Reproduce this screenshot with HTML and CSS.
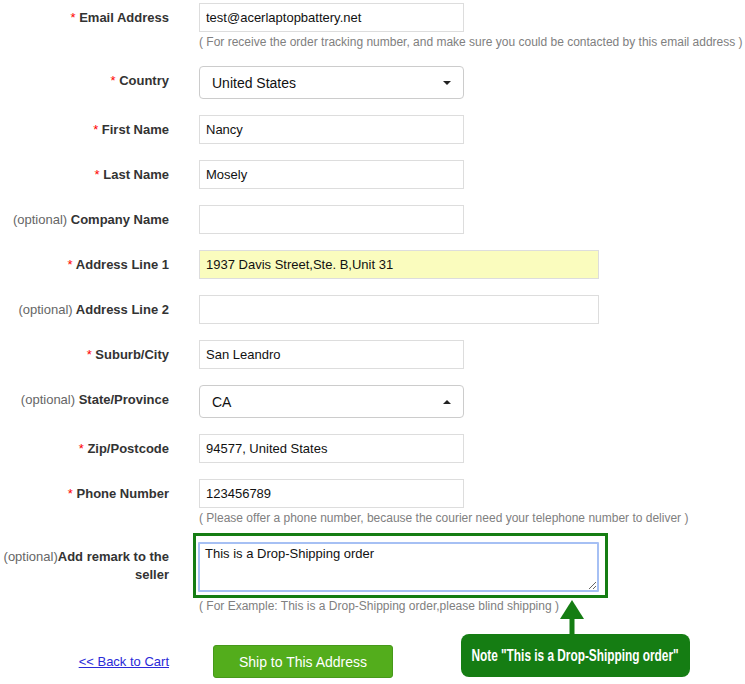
FILE: index.html
```html
<!DOCTYPE html>
<html>
<head>
<meta charset="utf-8">
<link rel="stylesheet" href="styles.css">
</head>
<body>
<form class="form">
  <div class="row">
    <label class="label"><span class="req">*</span> Email Address</label>
    <div class="field">
      <input class="input" type="text" value="test@acerlaptopbattery.net">
      <div class="hint">( For receive the order tracking number, and make sure you could be contacted by this email address )</div>
    </div>
  </div>
  <div class="row">
    <label class="label"><span class="req">*</span> Country</label>
    <div class="field">
      <div class="select-wrap down"><select class="select"><option>United States</option></select></div>
    </div>
  </div>
  <div class="row">
    <label class="label"><span class="req">*</span> First Name</label>
    <div class="field"><input class="input" type="text" value="Nancy"></div>
  </div>
  <div class="row">
    <label class="label"><span class="req">*</span> Last Name</label>
    <div class="field"><input class="input" type="text" value="Mosely"></div>
  </div>
  <div class="row">
    <label class="label"><span class="opt">(optional)</span> Company Name</label>
    <div class="field"><input class="input" type="text" value=""></div>
  </div>
  <div class="row">
    <label class="label"><span class="req">*</span> Address Line 1</label>
    <div class="field"><input class="input wide filled" type="text" value="1937 Davis Street,Ste. B,Unit 31"></div>
  </div>
  <div class="row">
    <label class="label"><span class="opt">(optional)</span> Address Line 2</label>
    <div class="field"><input class="input wide" type="text" value=""></div>
  </div>
  <div class="row">
    <label class="label"><span class="req">*</span> Suburb/City</label>
    <div class="field"><input class="input" type="text" value="San Leandro"></div>
  </div>
  <div class="row">
    <label class="label"><span class="opt">(optional)</span> State/Province</label>
    <div class="field">
      <div class="select-wrap up"><select class="select"><option>CA</option></select></div>
    </div>
  </div>
  <div class="row">
    <label class="label"><span class="req">*</span> Zip/Postcode</label>
    <div class="field"><input class="input" type="text" value="94577, United States"></div>
  </div>
  <div class="row">
    <label class="label"><span class="req">*</span> Phone Number</label>
    <div class="field">
      <input class="input" type="text" value="123456789">
      <div class="hint">( Please offer a phone number, because the courier need your telephone number to deliver )</div>
    </div>
  </div>
  <div class="row">
    <label class="label label-multi"><span class="opt">(optional)</span>Add remark to the seller</label>
    <div class="field">
      <textarea class="textarea">This is a Drop-Shipping order</textarea>
      <div class="hint hint-ta">( For Example: This is a Drop-Shipping order,please blind shipping )</div>
    </div>
  </div>
  <div class="row row-actions">
    <div class="label label-link"><a class="back" href="#">&lt;&lt; Back to Cart</a></div>
    <div class="field"><button class="btn" type="button">Ship to This Address</button></div>
  </div>
</form>

<div class="note-frame"></div>
<svg class="note-arrow" width="26" height="36" viewBox="0 0 26 36">
  <polygon points="13,1 1,20 25,20" fill="#157d13"/>
  <rect x="10.5" y="19" width="5" height="17" fill="#157d13"/>
</svg>
<div class="note"><span class="note-text">Note "This is a Drop-Shipping order"</span></div>
</body>
</html>
```
FILE: styles.css
```css
html, body {
  margin: 0;
  padding: 0;
  overflow: hidden;
  background: #fff;
}
body {
  font-family: "Liberation Sans", Arial, sans-serif;
  color: #333;
  position: relative;
  width: 745px;
  height: 684px;
}
.form {
  padding-top: 3px;
}
.row {
  display: flex;
  align-items: flex-start;
  margin-bottom: 16px;
}
.label {
  flex: none;
  box-sizing: border-box;
  width: 169px;
  height: 29px;
  margin-right: 30px;
  text-align: right;
  font-size: 13px;
  font-weight: bold;
  line-height: 30px;
  color: #333;
  white-space: nowrap;
}
.req {
  color: #f00;
  font-weight: normal;
  line-height: 1;
}
.opt {
  color: #666;
  font-weight: normal;
  font-size: 13px;
  line-height: 1;
}
.field {
  display: flex;
  flex-direction: column;
  align-items: flex-start;
}
.input {
  box-sizing: border-box;
  width: 265px;
  height: 29px;
  margin: 0;
  border: 1px solid #ddd;
  border-radius: 0;
  padding: 0 6px;
  font-family: "Liberation Sans", Arial, sans-serif;
  font-size: 13px;
  color: #111;
  background: #fff;
  outline: none;
}
.input.wide {
  width: 400px;
}
.input.filled {
  background: #fafcbe;
}
.hint {
  margin-top: 2px;
  font-size: 12px;
  line-height: 16px;
  color: #808080;
  white-space: nowrap;
}
.select-wrap {
  position: relative;
  width: 265px;
}
.select {
  display: block;
  box-sizing: border-box;
  width: 265px;
  height: 33px;
  margin: 0;
  border: 1px solid #ccc;
  border-radius: 4px;
  padding: 0 12px;
  font-family: "Liberation Sans", Arial, sans-serif;
  font-size: 14px;
  color: #111;
  background: #fff;
  -webkit-appearance: none;
  appearance: none;
  outline: none;
}
.select-wrap::after {
  content: "";
  position: absolute;
  right: 13px;
  top: 15px;
  width: 0;
  height: 0;
  border-left: 4px solid transparent;
  border-right: 4px solid transparent;
}
.select-wrap.down::after {
  border-top: 4px solid #222;
}
.select-wrap.up::after {
  border-bottom: 4px solid #222;
}
.label-multi {
  height: auto;
  line-height: 18px;
  padding-top: 6px;
  white-space: normal;
}
.textarea {
  display: block;
  box-sizing: border-box;
  width: 401px;
  height: 50px;
  margin: 0 0 0 -1px;
  border: 2px solid #a6c0f4;
  border-radius: 1px;
  padding: 2px 5px;
  font-family: "Liberation Sans", Arial, sans-serif;
  font-size: 13px;
  line-height: 15px;
  color: #111;
  outline: none;
  resize: both;
}
.hint-ta {
  margin-top: 6px;
}
.row-actions {
  margin-top: 31px;
  align-items: center;
}
.label-link {
  height: 33px;
  font-weight: normal;
  line-height: 33px;
}
.back {
  color: #2a2ad8;
  text-decoration: underline;
  font-size: 13px;
}
.btn {
  display: block;
  box-sizing: border-box;
  width: 180px;
  height: 33px;
  margin-left: 14px;
  background: #53ad1c;
  border: 1px solid #46991a;
  border-radius: 3px;
  color: #fff;
  font-family: "Liberation Sans", Arial, sans-serif;
  font-size: 14px;
  padding: 0;
  cursor: pointer;
}
.note-frame {
  position: absolute;
  left: 193px;
  top: 533px;
  width: 409px;
  height: 59px;
  border: 3px solid #157d13;
  pointer-events: none;
}
.note-arrow {
  position: absolute;
  left: 559px;
  top: 599px;
}
.note {
  position: absolute;
  left: 461px;
  top: 634px;
  width: 229px;
  height: 43px;
  background: #157d13;
  border-radius: 8px;
  display: flex;
  align-items: center;
  justify-content: center;
}
.note-text {
  display: inline-block;
  flex: none;
  color: #fff;
  font-family: "Liberation Sans", Arial, sans-serif;
  font-weight: bold;
  font-size: 16px;
  line-height: 16px;
  white-space: nowrap;
  transform: scaleX(0.74);
}
```
